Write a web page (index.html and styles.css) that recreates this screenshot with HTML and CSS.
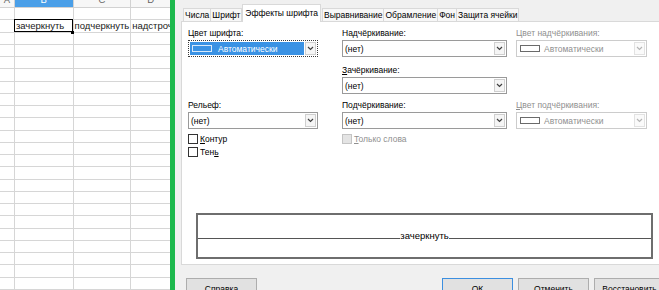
FILE: index.html
```html
<!DOCTYPE html>
<html lang="ru">
<head>
    <meta charset="UTF-8">
    <title>Формат ячеек</title>
    <link rel="stylesheet" href="styles.css">
</head>
<body>
    <div class="sheet">
        <div class="sheet-head">
            <div class="hcell col-a"><span>A</span></div>
            <div class="hcell col-b active"><span>B</span></div>
            <div class="hcell col-c"><span>C</span></div>
            <div class="hcell col-d"><span>D</span></div>
        </div>
        <div class="row"><div class="cell col-a"></div><div class="cell col-b"></div><div class="cell col-c"></div><div class="cell col-d"></div></div>
        <div class="row"><div class="cell col-a"></div><div class="cell col-b selected">зачеркнуть</div><div class="cell col-c">подчеркнуть</div><div class="cell col-d">надстрочный</div></div>
        <div class="row"><div class="cell col-a"></div><div class="cell col-b"></div><div class="cell col-c"></div><div class="cell col-d"></div></div>
        <div class="row"><div class="cell col-a"></div><div class="cell col-b"></div><div class="cell col-c"></div><div class="cell col-d"></div></div>
        <div class="row"><div class="cell col-a"></div><div class="cell col-b"></div><div class="cell col-c"></div><div class="cell col-d"></div></div>
        <div class="row"><div class="cell col-a"></div><div class="cell col-b"></div><div class="cell col-c"></div><div class="cell col-d"></div></div>
        <div class="row"><div class="cell col-a"></div><div class="cell col-b"></div><div class="cell col-c"></div><div class="cell col-d"></div></div>
        <div class="row"><div class="cell col-a"></div><div class="cell col-b"></div><div class="cell col-c"></div><div class="cell col-d"></div></div>
        <div class="row"><div class="cell col-a"></div><div class="cell col-b"></div><div class="cell col-c"></div><div class="cell col-d"></div></div>
        <div class="row"><div class="cell col-a"></div><div class="cell col-b"></div><div class="cell col-c"></div><div class="cell col-d"></div></div>
        <div class="row"><div class="cell col-a"></div><div class="cell col-b"></div><div class="cell col-c"></div><div class="cell col-d"></div></div>
        <div class="row"><div class="cell col-a"></div><div class="cell col-b"></div><div class="cell col-c"></div><div class="cell col-d"></div></div>
        <div class="row"><div class="cell col-a"></div><div class="cell col-b"></div><div class="cell col-c"></div><div class="cell col-d"></div></div>
        <div class="row"><div class="cell col-a"></div><div class="cell col-b"></div><div class="cell col-c"></div><div class="cell col-d"></div></div>
        <div class="row"><div class="cell col-a"></div><div class="cell col-b"></div><div class="cell col-c"></div><div class="cell col-d"></div></div>
        <div class="row"><div class="cell col-a"></div><div class="cell col-b"></div><div class="cell col-c"></div><div class="cell col-d"></div></div>
        <div class="row"><div class="cell col-a"></div><div class="cell col-b"></div><div class="cell col-c"></div><div class="cell col-d"></div></div>
        <div class="row"><div class="cell col-a"></div><div class="cell col-b"></div><div class="cell col-c"></div><div class="cell col-d"></div></div>
        <div class="row"><div class="cell col-a"></div><div class="cell col-b"></div><div class="cell col-c"></div><div class="cell col-d"></div></div>
        <div class="row"><div class="cell col-a"></div><div class="cell col-b"></div><div class="cell col-c"></div><div class="cell col-d"></div></div>
        <div class="row"><div class="cell col-a"></div><div class="cell col-b"></div><div class="cell col-c"></div><div class="cell col-d"></div></div>
        <div class="row"><div class="cell col-a"></div><div class="cell col-b"></div><div class="cell col-c"></div><div class="cell col-d"></div></div>
        <div class="row"><div class="cell col-a"></div><div class="cell col-b"></div><div class="cell col-c"></div><div class="cell col-d"></div></div>
    </div>

    <div class="divider"></div>

    <div class="dialog">
        <div class="tabs">
            <span class="tab">Числа</span>
            <span class="tab">Шрифт</span>
            <span class="tab active">Эффекты шрифта</span>
            <span class="tab">Выравнивание</span>
            <span class="tab">Обрамление</span>
            <span class="tab">Фон</span>
            <span class="tab">Защита ячейки</span>
        </div>

        <div class="panel">
            <div class="fields">
                <div class="col col1">
                    <span class="label">Цвет шрифта:</span>
                    <div class="combo focus">
                        <div class="value"><i class="swatch"></i>Автоматически</div>
                        <div class="arrow"><svg width="7" height="5" viewBox="0 0 7 5"><polyline points="1,1 3.5,3.5 6,1" /></svg></div>
                    </div>
                    <span class="label gap-big">Рельеф:</span>
                    <div class="combo">
                        <div class="value">(нет)</div>
                        <div class="arrow"><svg width="7" height="5" viewBox="0 0 7 5"><polyline points="1,1 3.5,3.5 6,1" /></svg></div>
                    </div>
                    <div class="check first"><i class="box"></i><span><u>К</u>онтур</span></div>
                    <div class="check"><i class="box"></i><span>Тен<u>ь</u></span></div>
                </div>

                <div class="col col2">
                    <span class="label">Надчёркивание:</span>
                    <div class="combo">
                        <div class="value">(нет)</div>
                        <div class="arrow"><svg width="7" height="5" viewBox="0 0 7 5"><polyline points="1,1 3.5,3.5 6,1" /></svg></div>
                    </div>
                    <span class="label gap-mid"><u>З</u>ачёркивание:</span>
                    <div class="combo">
                        <div class="value">(нет)</div>
                        <div class="arrow"><svg width="7" height="5" viewBox="0 0 7 5"><polyline points="1,1 3.5,3.5 6,1" /></svg></div>
                    </div>
                    <span class="label gap-small">Подчёркивание:</span>
                    <div class="combo">
                        <div class="value">(нет)</div>
                        <div class="arrow"><svg width="7" height="5" viewBox="0 0 7 5"><polyline points="1,1 3.5,3.5 6,1" /></svg></div>
                    </div>
                    <div class="check first disabled"><i class="box"></i><span><u>Т</u>олько слова</span></div>
                </div>

                <div class="col col3 disabled">
                    <span class="label">Цвет надчёркивания:</span>
                    <div class="combo">
                        <div class="value"><i class="swatch"></i>Автоматически</div>
                        <div class="arrow"><svg width="7" height="5" viewBox="0 0 7 5"><polyline points="1,1 3.5,3.5 6,1" /></svg></div>
                    </div>
                    <span class="label gap-big"><u>Ц</u>вет подчёркивания:</span>
                    <div class="combo">
                        <div class="value"><i class="swatch"></i>Автоматически</div>
                        <div class="arrow"><svg width="7" height="5" viewBox="0 0 7 5"><polyline points="1,1 3.5,3.5 6,1" /></svg></div>
                    </div>
                </div>
            </div>

            <div class="preview">
                <div class="preview-line">
                    <span class="rule"></span>
                    <span class="sample">зачеркнуть</span>
                    <span class="rule"></span>
                </div>
            </div>
        </div>

        <div class="buttons">
            <span class="btn">Справка</span>
            <span class="btn ok">ОК</span>
            <span class="btn">Отменить</span>
            <span class="btn">Восстановить</span>
        </div>
    </div>
</body>
</html>
```

FILE: styles.css
```css
body {
    margin: 0;
    display: flex;
    height: 290px;
    overflow: hidden;
    background-color: #f0f0f0;
    font-family: "Liberation Sans", Arial, sans-serif;
}

/* таблица слева */
.sheet {
    width: 170px;
    flex-shrink: 0;
    background-color: #fff;
    overflow: hidden;
    font-size: 9.5px;
    color: #1a1a1a;
}
.sheet-head {
    display: flex;
    height: 7px;
    overflow: hidden;
    border-bottom: 1px solid #d2d2d2;
    background-color: #f7f7f7;
}
.hcell {
    box-sizing: border-box;
    border-right: 1px solid #d2d2d2;
    text-align: center;
    color: #666;
}
.hcell span {
    display: block;
    line-height: 14px;
    margin-top: -7px;
}
.hcell.active {
    background-color: #4a9fe8;
    color: #fff;
}
.col-a { width: 15px; }
.col-b { width: 59px; }
.col-c { width: 58px; }
.col-d { width: 39px; border-right: 0 !important; }

.row {
    display: flex;
    box-sizing: border-box;
    height: 12.25px;
    border-bottom: 1px solid #d6d6d6;
}
.cell {
    box-sizing: border-box;
    border-right: 1px solid #d6d6d6;
    white-space: nowrap;
    overflow: hidden;
    line-height: 12px;
    padding-left: 1px;
}
.cell.selected {
    position: relative;
    overflow: visible;
}
.cell.selected::after {
    content: '';
    position: absolute;
    left: -1px;
    top: -1px;
    right: 0;
    bottom: 0;
    border: 1px solid #000;
}
.cell.selected::before {
    content: '';
    position: absolute;
    right: -1px;
    bottom: -2px;
    width: 3px;
    height: 3px;
    background-color: #000;
    z-index: 1;
}

.divider {
    width: 5px;
    flex-shrink: 0;
    background-color: #1db84d;
}

/* диалог */
.dialog {
    box-sizing: border-box;
    width: 490px;
    flex-shrink: 0;
    padding-left: 6px;
    font-size: 8.5px;
    color: #000;
}
.tabs {
    display: flex;
    align-items: flex-end;
    height: 21px;
    padding-left: 2px;
}
.tab {
    box-sizing: border-box;
    height: 13px;
    line-height: 12px;
    padding: 0 1px;
    border: 1px solid #d9d9d9;
    border-bottom: 0;
    margin-right: -1px;
    background-color: #f7f7f7;
    white-space: nowrap;
}
.tab.active {
    height: 18px;
    line-height: 14px;
    padding: 1px 2px 0 2px;
    margin: 0 1px -1px 1px;
    background-color: #fff;
    position: relative;
    z-index: 1;
}
.panel {
    box-sizing: border-box;
    height: 244px;
    background-color: #fff;
    border: 1px solid #d9d9d9;
    padding: 4px 0 0 6px;
}
.fields {
    display: flex;
}
.col {
    display: flex;
    flex-direction: column;
    align-items: flex-start;
}
.col1 { width: 154px; }
.col2 { width: 174px; }
.col3 { width: 131px; }
.col1 .combo { width: 130px; }
.col2 .combo { width: 165px; }
.col3 .combo { width: 131px; }

.label {
    display: block;
    height: 14px;
    line-height: 14px;
    white-space: nowrap;
}
.gap-big { margin-top: 41px; }
.gap-mid { margin-top: 6px; }
.gap-small { margin-top: 4px; }

.combo {
    display: flex;
    box-sizing: border-box;
    height: 17px;
    border: 1px solid #9a9a9a;
    background-color: #fff;
    padding: 1px;
}
.combo .value {
    flex: 1;
    display: flex;
    align-items: center;
    padding-left: 1px;
    white-space: nowrap;
}
.combo .arrow {
    box-sizing: border-box;
    width: 11px;
    border: 1px solid #cfcfcf;
    background-color: #f5f5f5;
    display: flex;
    align-items: center;
    justify-content: center;
}
.arrow polyline {
    fill: none;
    stroke: #404040;
    stroke-width: 1.2;
}
.combo.focus {
    border: 1px dotted #3a3a3a;
}
.combo.focus .value {
    background-color: #3a92e4;
    color: #fff;
    margin-right: 1px;
}
.swatch {
    box-sizing: border-box;
    width: 20px;
    height: 7px;
    border: 1px solid #555;
    background-color: #fff;
    margin: 0 6px 0 1px;
}
.focus .swatch {
    border-color: #d6e8fa;
    background-color: #3a92e4;
}

.disabled {
    color: #8f8f8f;
}
.disabled .combo {
    border-color: #cccccc;
}
.disabled .arrow {
    border-color: #e2e2e2;
    background-color: #fafafa;
}
.disabled .arrow polyline {
    stroke: #b5b5b5;
}
.disabled .swatch {
    border-color: #6a6a6a;
    margin-right: 4px;
}

.check {
    display: flex;
    align-items: center;
    height: 10px;
    line-height: 10px;
    margin-top: 3px;
    white-space: nowrap;
}
.check.first {
    margin-top: 5px;
}
.box {
    box-sizing: border-box;
    width: 10px;
    height: 10px;
    border: 1px solid #333;
    background-color: #fff;
    margin-right: 2px;
}
.check.disabled .box {
    border-color: #c4c4c4;
    background-color: #e4e4e4;
}

/* образец */
.preview {
    box-sizing: border-box;
    width: 457px;
    height: 46px;
    margin: 56px 0 0 8px;
    border: 2px solid #6e6e6e;
    padding-top: 15px;
}
.preview-line {
    display: flex;
    align-items: baseline;
    line-height: 12px;
}
.rule {
    flex: 1;
    height: 0;
    border-bottom: 1px solid #555;
}
.sample {
    font-size: 9.5px;
}

.buttons {
    display: flex;
    gap: 5px;
    margin-top: 13px;
    padding-left: 5px;
}
.btn {
    box-sizing: border-box;
    width: 71px;
    height: 23px;
    line-height: 21px;
    text-align: center;
    border: 1px solid #adadad;
    background-color: #e1e1e1;
    flex-shrink: 0;
}
.btn.ok {
    margin-left: auto;
    border-color: #3c8fe0;
}
```
